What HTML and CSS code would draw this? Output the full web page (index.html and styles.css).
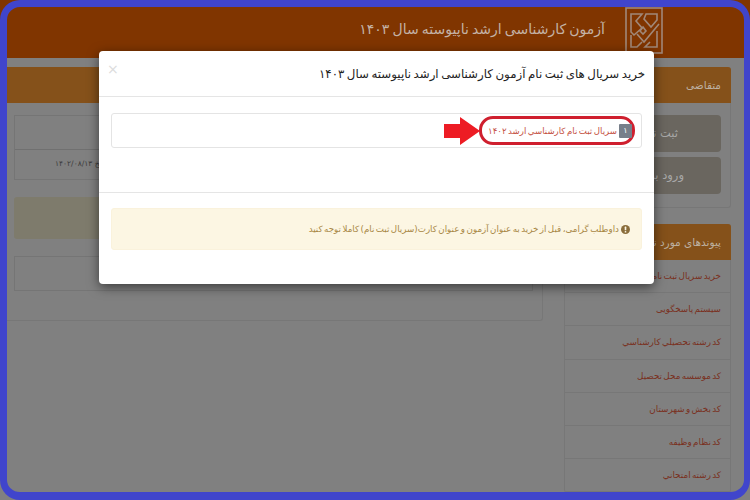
FILE: index.html
```html
<!DOCTYPE html>
<html lang="fa" dir="rtl">
<head>
<meta charset="utf-8">
<title>آزمون کارشناسی ارشد ناپیوسته سال ۱۴۰۳</title>
<link rel="stylesheet" href="styles.css">
</head>
<body>
<div class="page">
  <header class="site-header">
    <svg class="logo" viewBox="0 0 38 47" aria-hidden="true">
      <rect x="1" y="1" width="36" height="45"/>
      <path d="M6 7H17L11 14L17 21L9 28L6 25V7ZM21 7H32V13L26 20L19 12Z"/>
      <path d="M12 27L19 35L34 17"/>
      <path d="M6 28V40H12L17 35M32 24V40H20L25 35"/>
      <path d="M18 20L21 24L18 27L15 24Z"/>
    </svg>
    <h1 class="site-title">آزمون کارشناسی ارشد ناپیوسته سال ۱۴۰۳</h1>
  </header>
  <main class="layout">
    <aside class="sidebar">
      <section class="panel">
        <h2 class="panel-heading">متقاضی</h2>
        <div class="panel-body actions">
          <a class="action">ثبت نام اولیه</a>
          <a class="action">ورود به سیستم</a>
        </div>
      </section>
      <section class="panel">
        <h2 class="panel-heading">پیوندهای مورد نیاز</h2>
        <ul class="links">
          <li>خرید سریال ثبت نام</li>
          <li>سیستم پاسخگویی</li>
          <li>کد رشته تحصیلي کارشناسي</li>
          <li>کد موسسه محل تحصیل</li>
          <li>کد بخش و شهرستان</li>
          <li>کد نظام وظیفه</li>
          <li>کد رشته امتحاني</li>
        </ul>
      </section>
    </aside>
    <section class="panel content">
      <h2 class="panel-heading">اطلاعیه</h2>
      <div class="content-body">
        <div class="table">
          <div class="row tall"></div>
          <div class="row date"><span>تاریخ <span class="date-value">۱۴۰۲/۰۸/۱۳</span></span></div>
        </div>
        <div class="notice"></div>
        <div class="table"><div class="row tall"></div></div>
      </div>
    </section>
  </main>

  <div class="modal" role="dialog">
    <div class="modal-header">
      <h3 class="modal-title">خرید سریال های ثبت نام آزمون کارشناسی ارشد ناپیوسته سال ۱۴۰۳</h3>
      <span class="close">×</span>
    </div>
    <div class="modal-body">
      <div class="list-item">
        <div class="ring">
          <span class="badge">۱</span>
          <a class="serial">سریال ثبت نام کارشناسي ارشد ۱۴۰۲</a>
        </div>
        <svg class="arrow" viewBox="0 0 36 28" aria-hidden="true"><path d="M0 7H16V0L36 14L16 28V21H0Z"/></svg>
      </div>
    </div>
    <div class="modal-footer">
      <div class="alert">
        <svg class="alert-icon" viewBox="0 0 10 10" aria-hidden="true"><circle cx="5" cy="5" r="5"/><rect x="4.1" y="1.8" width="1.8" height="4" rx=".6"/><rect x="4.1" y="6.6" width="1.8" height="1.7" rx=".6"/></svg>
        <span>داوطلب گرامی، قبل از خرید به عنوان آزمون و عنوان کارت(سریال ثبت نام) کاملا توجه کنید</span>
      </div>
    </div>
  </div>
  <div class="frame"></div>
</div>
</body>
</html>
```
FILE: styles.css
```css
* { box-sizing: border-box; }
html, body { margin: 0; padding: 0; }
body { background: #808080; font-family: "DejaVu Sans", "Noto Sans", sans-serif; }
.page { position: relative; width: 750px; height: 500px; overflow: hidden; background: #808080; }

.site-header { height: 58px; background: #803500; display: flex; align-items: flex-start; padding-right: 87px; gap: 20px; }
.logo { width: 38px; height: 47px; margin-top: 7px; flex: none; fill: none; stroke: #a08878; stroke-width: 1.6; }
.site-title { margin: 17px 0 0; font-size: 14px; line-height: 24px; font-weight: 400; word-spacing: -1.3px; color: #c4b2a5; }

.layout { display: flex; align-items: flex-start; gap: 21px; padding: 9px 19px 0 0; }
.sidebar { width: 167px; flex: none; display: flex; flex-direction: column; gap: 16px; }
.content { flex: 1; }

.panel { border: 1px solid #777; border-top: 0; border-radius: 3px; }
.panel-heading { margin: 0 -1px; height: 36px; padding-right: 10px; background: #85511a; border-radius: 3px 3px 0 0; font-size: 10.5px; line-height: 36px; font-weight: 400; color: #bdb0a0; }

.actions { padding: 12px 9px 13px 9px; display: flex; flex-direction: column; gap: 5px; }
.action { height: 37px; border-radius: 4px; background: #6a665f; color: #a8a8a8; font-size: 11.5px; line-height: 37px; text-align: center; }

.links { list-style: none; margin: 0; padding: 0; }
.links li { height: 33.2px; padding-right: 9px; border-bottom: 1px solid #777; font-size: 8.8px; line-height: 33px; word-spacing: -1.5px; color: #7a3020; }

.content-body { padding: 12px 9px 29px 13px; }
.table { border: 1px solid #757575; }
.row { height: 33px; }
.row.date { height: 30px; border-top: 1px solid #707070; display: flex; justify-content: flex-end; padding-left: 40px; font-size: 7.5px; line-height: 28px; color: #3c3c3c; }
.date-value { letter-spacing: -.4px; }
.notice { height: 42px; margin: 17px 0; background: #7e7b6c; border-radius: 3px; }

.modal { position: absolute; left: 99px; top: 51px; width: 555px; height: 233px; background: #fff; border-radius: 4px; box-shadow: 0 3px 12px rgba(0, 0, 0, .55); }
.modal-header { height: 46px; display: flex; align-items: center; justify-content: space-between; padding: 0 9px 0 8px; border-bottom: 1px solid #e5e5e5; }
.modal-title { margin: 0; font-size: 11.8px; font-weight: 400; word-spacing: -1.2px; color: #222; }
.close { margin-top: -10px; font-size: 14px; color: #dcdcdc; }
.modal-body { height: 96px; padding: 16px 12px 0; border-bottom: 1px solid #e5e5e5; }
.list-item { height: 35px; display: flex; align-items: center; padding-right: 6px; border: 1px solid #e4e4e4; border-radius: 3px; }
.ring { width: 156px; height: 29px; flex: none; display: flex; align-items: center; gap: 2px; padding-right: 0; border: 3px solid #cf1f2e; border-radius: 14px; }
.badge { width: 13px; height: 14px; flex: none; background: #777f8a; color: #fff; font-size: 8px; line-height: 14px; text-align: center; border-radius: 1px; }
.serial { font-size: 8.6px; word-spacing: -1.2px; white-space: nowrap; color: #c4503f; }
.arrow { width: 36px; height: 28px; flex: none; margin-right: -1px; fill: #ed1c24; }
.modal-footer { padding: 15px 12px 0; }
.alert { height: 42px; display: flex; align-items: center; gap: 2px; padding-right: 11px; background: #fcf6e3; border: 1px solid #faf2dc; border-radius: 3px; font-size: 8.7px; word-spacing: -1.3px; color: #a88745; }
.alert-icon { width: 9px; height: 9px; flex: none; fill: #8a6d3b; }
.alert-icon rect { fill: #fcf6e3; }

.frame { position: absolute; inset: 0; border: solid #4045cc; border-width: 7px 6px 8px 7px; border-radius: 20px; pointer-events: none; }
```
